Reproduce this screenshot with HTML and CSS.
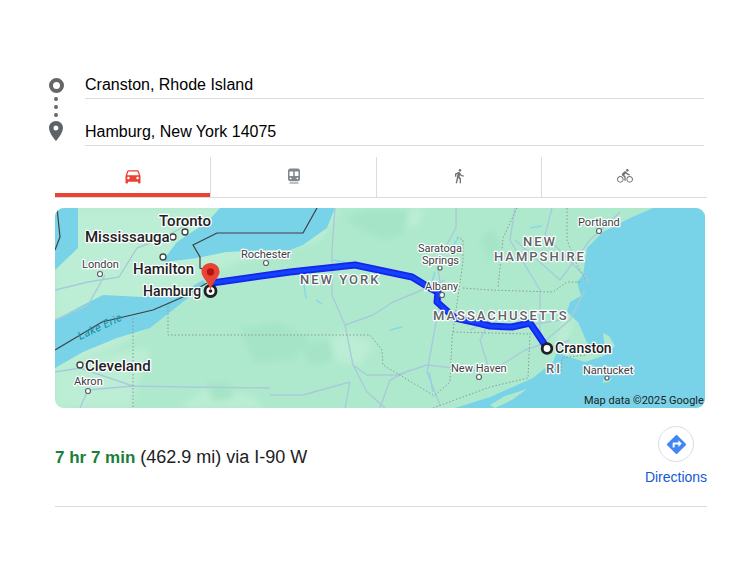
FILE: index.html
```html
<!DOCTYPE html>
<html lang="en">
<head>
<meta charset="utf-8">
<title>Directions</title>
<link rel="stylesheet" href="styles.css">
</head>
<body>
<main class="card">
  <section class="route-form">
    <div class="route-icons">
      <span class="origin-ring"></span>
      <span class="dot"></span><span class="dot"></span><span class="dot"></span>
      <svg class="dest-pin" viewBox="0 0 14 20"><path d="M7 0C3.1 0 0 3.1 0 7c0 5.2 7 13 7 13s7-7.8 7-13c0-3.900-3.100-7-7-7zm0 9.500A2.500 2.500 0 1 1 7 4.500a2.500 2.500 0 0 1 0 5z"/></svg>
    </div>
    <div class="route-fields">
      <div class="field">Cranston, Rhode Island</div>
      <div class="field">Hamburg, New York 14075</div>
    </div>
  </section>

  <nav class="tabs">
    <div class="tab active"><svg class="ico ico-car" viewBox="0 0 24 24"><path d="M18.920 6.010C18.720 5.420 18.160 5 17.500 5h-11c-.66 0-1.210.42-1.420 1.010L3 12v8c0 .55.45 1 1 1h1c.55 0 1-.45 1-1v-1h12v1c0 .55.45 1 1 1h1c.55 0 1-.45 1-1v-8l-2.080-5.990zM6.500 16c-.83 0-1.500-.67-1.500-1.500S5.670 13 6.500 13s1.500.67 1.500 1.500S7.330 16 6.500 16zm11 0c-.83 0-1.500-.67-1.500-1.500s.67-1.500 1.500-1.500 1.500.67 1.500 1.500-.67 1.500-1.500 1.500zM5 11l1.500-4.500h11L19 11H5z"/></svg></div>
    <div class="tab"><svg class="ico ico-transit" viewBox="0 0 24 24"><path fill-rule="evenodd" d="M7 2h10c1.700 0 3 1.300 3 3v11c0 1.700-1.300 3-3 3H7c-1.700 0-3-1.300-3-3V5c0-1.700 1.300-3 3-3zM6 6v6h5V6zm7 0v6h5V6zM7.500 14a1.200 1.200 0 1 0 0 2.400 1.200 1.200 0 0 0 0-2.400zm9 0a1.200 1.200 0 1 0 0 2.400 1.200 1.200 0 0 0 0-2.400zM6 20.500h12V22H6z"/></svg></div>
    <div class="tab"><svg class="ico ico-walk" viewBox="0 0 24 24"><path d="M13.500 5.500c1.100 0 2-.9 2-2s-.9-2-2-2-2 .9-2 2 .9 2 2 2zM9.800 8.900L7 23h2.100l1.800-8 2.100 2v6h2v-7.500l-2.100-2 .6-3C14.800 12 16.800 13 19 13v-2c-1.900 0-3.500-1-4.300-2.400l-1-1.600c-.4-.6-1-1-1.700-1-.3 0-.5.1-.8.1L6 8.300V13h2V9.600l1.800-.7"/></svg></div>
    <div class="tab"><svg class="ico ico-small" viewBox="0 0 24 24"><path d="M15.500 5.500c1.100 0 2-.9 2-2s-.9-2-2-2-2 .9-2 2 .9 2 2 2zM5 12c-2.800 0-5 2.200-5 5s2.200 5 5 5 5-2.200 5-5-2.200-5-5-5zm0 8.500c-1.900 0-3.500-1.600-3.500-3.500s1.600-3.500 3.500-3.500 3.500 1.600 3.500 3.500-1.600 3.500-3.500 3.500zm5.800-10l2.400-2.400.8.8c1.300 1.300 3 2.100 5.100 2.100V9c-1.500 0-2.700-.6-3.600-1.500l-1.900-1.900c-.5-.4-1-.6-1.600-.6s-1.100.2-1.400.6L7.800 8.400c-.4.4-.6.9-.6 1.400 0 .6.2 1.100.6 1.400L11 14v5h2v-6.200l-2.200-2.300zM19 12c-2.800 0-5 2.200-5 5s2.200 5 5 5 5-2.200 5-5-2.200-5-5-5zm0 8.500c-1.900 0-3.500-1.600-3.500-3.500s1.600-3.500 3.500-3.500 3.500 1.600 3.500 3.500-1.600 3.500-3.500 3.500z"/></svg></div>
  </nav>

  <figure class="map">
    <svg class="map-svg" viewBox="55 208 650 200">
      <defs>
        <filter id="soft" x="0" y="0" width="1" height="1"><feGaussianBlur stdDeviation="0.45"/></filter>
        <filter id="patch" x="-0.1" y="-0.1" width="1.200" height="1.200"><feGaussianBlur stdDeviation="3"/></filter>
      </defs>
      <rect class="land" x="55" y="208" width="650" height="200"/>
      <g filter="url(#patch)">
        <path class="land-pale" d="M55 208H340L320 240 240 262 205 275 180 300 120 345 55 375zM55 375L120 352 150 348 130 408H55z"/>
        <path class="land-pale" d="M345 330l30 15-15 20-30-5-10-15zM180 408l30-22 40 10 15 12zM255 215l25 8 20 22-35 0zM555 345l10-30 8 6-6 20zM395 208h30l-8 18-18 0z"/>
        <path class="land-deep" d="M345 218l25-8h40l-8 25-20 5-15-8zM240 330l35-8 35 15-15 22-40 4zM205 382l25 2 4 14-20 4zM480 240l12-12 10 20-12 14zM300 345l30-5 5 20-25 5z"/>
      </g>
      <g filter="url(#soft)">
        <path class="water" d="M55 208H78V248L55 270Z"/>
        <path class="water" d="M165 258L177 242 207 222 220 208H335L327 228 303 245 290 250 270 250 226 252 197 258 165 262Z"/>
        <path class="water" d="M55 320L83 305 103 295 143 297 183 292 203 280 206 284 183 302 150 328 117 338 83 352 55 368Z"/>
        <path class="water" d="M653 208L630 218 603 232 587 248 583 275 577 282 581 296 570 302 567 312 578 322 588 345 596 352 605 347 603 333 609 336 615 346 603 356 585 362 566 356 557 352 553 362 533 378 490 397 445 408H705V208Z"/>
        <path class="land" d="M436 405L470 392 500 384 515 383 490 397 455 408H436ZM490 405L505 396 527 389 512 400 495 408ZM603 379l9-1-3 4-6 1zM586 366l8-1-3 4-7 1z"/>
        <path class="water-thin" d="M333 260l15 3M303 280l3 18M316 300l6 4M450 268l8-8M452 248l6-10M390 330l12-3M530 228l12-2M429 372l4 20M435 272l-3 10"/>
        <path class="road" d="M55 290L88 282 119 277 137 248 163 238 185 226M55 320L88 305 105 275M55 372L80 368 133 386 185 387 270 388M80 408L88 390 133 386M335 208L332 250 332 295 345 325 353 365 367 392 385 408M345 325L373 315 393 302 427 288 445 280M442 295L435 328 427 372 440 405M456 208L456 228 437 262 442 295M353 365L367 375 397 375 427 365 490 372 525 350 540 345 570 320 585 290M270 395L303 395 350 382M350 382L345 408M515 208L510 240 540 290 540 345M515 240L560 280 590 240 620 212M545 350L570 340M500 330L530 325 560 320M490 372L480 340 490 320 470 330M552 208L545 235 590 282M380 408L390 380 410 370"/>
        <path class="state" d="M133 318V408M168 303V335H270H370L382 350 383 365 433 395M457 237L463 240 463 262 452 338 450 382 433 397M463 288L490 290 553 292 567 282 580 282M453 332L530 334M530 333L528 378 490 387 433 408M517 208L503 238 498 288M567 208L567 240 577 265 586 280M585 355L562 358 561 372"/>
        <path class="border" d="M57 208L60 237 55 250M317 208L303 233H217L193 245 200 257 200 268 205 270M55 350L102 322 153 310 183 297 207 283"/>
      </g>

      <path class="route-edge" d="M212 283L290 272 355 265 412 277 430 288 438 292 437 302 455 318 478 323 490 326 512 327 530 323 537 333 547 348"/>
      <path class="route-core" d="M212 283L290 272 355 265 412 277 430 288 438 292 437 302 455 318 478 323 490 326 512 327 530 323 537 333 547 348"/>

      <g class="places">
        <circle cx="185" cy="232" r="3"/><circle cx="173" cy="237" r="3"/><circle cx="163" cy="257" r="3"/>
        <circle class="small" cx="100" cy="274" r="2.500"/><circle class="small" cx="266" cy="263" r="2.500"/>
        <circle class="small" cx="440" cy="268" r="2"/><circle class="small" cx="442" cy="295" r="2.500"/>
        <circle class="small" cx="479" cy="377" r="2.500"/><circle class="small" cx="599" cy="231" r="2.500"/>
        <circle class="small" cx="607" cy="378" r="2"/><circle cx="80" cy="365" r="3"/><circle class="small" cx="88" cy="391" r="2.500"/>
      </g>

      <text class="lbl lbl-big" x="159" y="226">Toronto</text>
      <text class="lbl lbl-big" x="85" y="242">Mississauga</text>
      <text class="lbl lbl-big" x="133" y="274">Hamilton</text>
      <text class="lbl lbl-big" x="85" y="371">Cleveland</text>
      <text class="lbl lbl-mid" x="143" y="296">Hamburg</text>
      <text class="lbl lbl-mid" x="555" y="353">Cranston</text>
      <text class="lbl" x="82" y="268">London</text>
      <text class="lbl" x="74" y="385">Akron</text>
      <text class="lbl" x="241" y="258">Rochester</text>
      <text class="lbl" x="418" y="252">Saratoga</text>
      <text class="lbl" x="422" y="264">Springs</text>
      <text class="lbl" x="425" y="290">Albany</text>
      <text class="lbl" x="451" y="372">New Haven</text>
      <text class="lbl" x="578" y="226">Portland</text>
      <text class="lbl" x="583" y="374">Nantucket</text>
      <text class="lbl lbl-state" x="300" y="284">NEW YORK</text>
      <text class="lbl lbl-state" x="433" y="320">MASSACHUSETTS</text>
      <text class="lbl lbl-state" x="523" y="246">NEW</text>
      <text class="lbl lbl-state" x="494" y="261">HAMPSHIRE</text>
      <text class="lbl lbl-state" x="546" y="373">RI</text>
      <text class="lake" x="80" y="340" transform="rotate(-25 80 340)">Lake Erie</text>
      <text class="attrib" x="584" y="404">Map data ©2025 Google</text>

      <circle class="stop-ring" cx="210.500" cy="291" r="5.500"/>
      <circle class="stop-dot" cx="210.500" cy="291" r="1.800"/>
      <circle class="stop-ring" cx="547" cy="348.500" r="4.800"/>
      <path class="pin" d="M210.500 263c-5 0-9 3.900-9 8.800 0 6 6.700 9 9 18.700 2.300-9.700 9-12.700 9-18.700 0-4.900-4-8.800-9-8.800z"/>
      <circle class="pin-dot" cx="210.500" cy="272" r="3.700"/>
    </svg>
  </figure>

  <section class="summary">
    <p class="summary-text"><strong class="time">7 hr 7 min</strong> (462.9 mi) via I-90 W</p>
    <a class="directions">
      <span class="dir-btn"><svg class="dir-ico" viewBox="0 0 24 24"><path d="M21.710 11.290l-9-9c-.39-.39-1.020-.39-1.410 0l-9 9c-.39.39-.39 1.020 0 1.410l9 9c.39.39 1.020.39 1.410 0l9-9c.39-.38.39-1.010 0-1.410zM14 14.500V12h-4v3H8v-4c0-.55.45-1 1-1h5V7.500l3.500 3.500-3.500 3.500z"/></svg></span>
      <span class="dir-label">Directions</span>
    </a>
  </section>
</main>
</body>
</html>
```
FILE: styles.css
```css
* { box-sizing: border-box; }
html, body { margin: 0; background: #fff; }
body { font-family: "Liberation Sans", Arial, sans-serif; color: #202124; }

.card { width: 652px; margin-left: 55px; padding-top: 52px; }

/* route form */
.route-form { display: flex; width: 655px; margin-left: -6px; }
.route-icons { width: 36px; display: flex; flex-direction: column; align-items: flex-start; padding-top: 26px; }
.origin-ring { width: 15px; height: 15px; border: 4px solid #666; border-radius: 50%; margin-bottom: 4px; }
.dot { width: 4px; height: 4px; border-radius: 50%; background: #666; margin: 0 0 4px 5px; }
.dest-pin { width: 14px; height: 20px; fill: #5f6368; }
.route-fields { flex: 1; }
.field { height: 47px; border-bottom: 1px solid #dadce0; display: flex; align-items: flex-end; padding-bottom: 4px; font-size: 16px; line-height: 19px; color: #000; }

/* tabs */
.tabs { display: grid; grid-template-columns: 156px 166px 165px 1fr; height: 41px; margin-top: 11px; border-bottom: 1px solid #dadce0; }
.tab { display: flex; align-items: center; justify-content: center; border-right: 1px solid #dadce0; padding-bottom: 2px; }
.tab:last-child { border-right: 0; }
.tab.active { box-shadow: inset 0 -4px 0 #ea4335; }
.ico { width: 20px; height: 20px; fill: #70757a; }
.ico-car { fill: #ea4335; }
.ico-transit { width: 18px; height: 18px; fill: #80868b; }
.ico-walk { width: 16px; height: 16px; }
.ico-small { width: 16px; height: 16px; }

/* map */
.map { width: 650px; height: 200px; margin: 10px 0 0; border-radius: 9px; overflow: hidden; }
.map-svg { display: block; width: 650px; height: 200px; }
.land { fill: #aee9cd; }
.land-pale { fill: #bcedd5; }
.land-deep { fill: #a5e4c6; }
.water { fill: #78d3e8; }
.water-thin { fill: none; stroke: #86d8ea; stroke-width: 1.500; }
.road { fill: none; stroke: #a9cbd9; stroke-width: 1.400; stroke-linejoin: round; }
.state { fill: none; stroke: #8a9a98; stroke-width: 1; stroke-dasharray: 1.500 2; }
.border { fill: none; stroke: #3c4043; stroke-width: 1.200; }
.route-edge { fill: none; stroke: #1c22e8; stroke-width: 7; stroke-linejoin: round; stroke-linecap: round; }
.route-core { fill: none; stroke: #0f44ff; stroke-width: 3.500; stroke-linejoin: round; stroke-linecap: round; }
.places circle { fill: #fff; stroke: #3c4043; stroke-width: 1.300; }
.places .small { stroke: #5f6368; stroke-width: 1.200; }
.lbl { font-family: Roboto, "Liberation Sans", sans-serif; font-size: 11px; fill: #3c4043; stroke: #fff; stroke-width: 2.500px; stroke-linejoin: round; paint-order: stroke; }
.lbl-big { font-size: 15px; fill: #202124; font-weight: 500; }
.lbl-mid { font-size: 14px; fill: #202124; font-weight: 500; }
.lbl-state { font-size: 13px; letter-spacing: 2px; fill: #5f6368; font-weight: 500; }
.lake { font-family: Roboto, "Liberation Sans", sans-serif; font-size: 11px; font-style: italic; letter-spacing: .5px; fill: #1a8a9e; }
.attrib { font-family: Roboto, "Liberation Sans", sans-serif; font-size: 11px; fill: #202124; }
.stop-ring { fill: #fff; stroke: #202124; stroke-width: 2.800; }
.stop-dot { fill: #202124; }
.pin { fill: #ea4335; }
.pin-dot { fill: #b31412; }

/* summary */
.summary { display: flex; justify-content: space-between; height: 99px; border-bottom: 1px solid #dadce0; padding-top: 18px; }
.summary-text { margin: 21px 0 0; font-size: 18px; line-height: 20px; color: #202124; }
.time { color: #188038; font-size: 17px; }
.directions { display: flex; flex-direction: column; align-items: center; width: 62px; }
.dir-btn { width: 36px; height: 36px; border: 1px solid #dadce0; border-radius: 50%; display: flex; align-items: center; justify-content: center; }
.dir-ico { width: 23px; height: 23px; fill: #4285f4; }
.dir-label { font-size: 14px; line-height: 18px; margin-top: 6px; color: #1558d6; white-space: nowrap; }
```
